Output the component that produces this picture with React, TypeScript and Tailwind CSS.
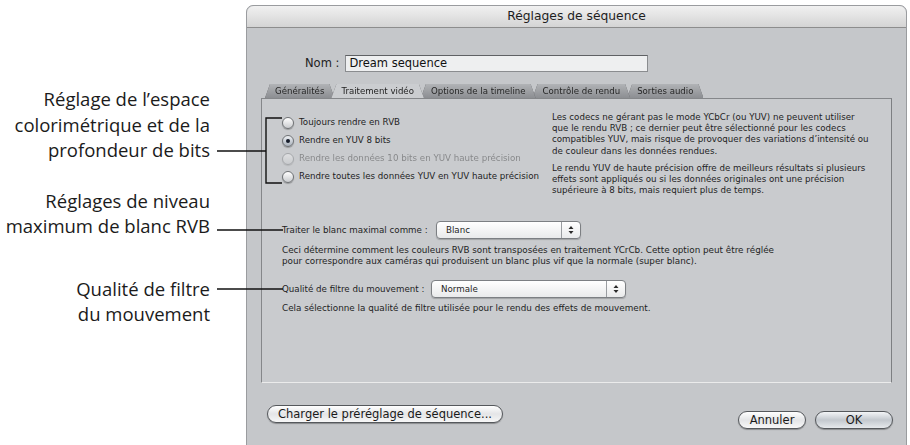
import React from 'react';

const Radio = ({ checked = false, disabled = false, label }: { checked?: boolean; disabled?: boolean; label: string }) => (
    <div className={`flex items-center h-[18px] ${disabled ? 'opacity-40' : ''}`}>
        <span
            className={`w-[12px] h-[12px] rounded-full border border-[#6f7275] shadow-[0_1px_1px_rgba(0,0,0,0.25)] flex items-center justify-center shrink-0 bg-gradient-to-b ${
                checked ? 'from-[#eef1f4] to-[#a9b1bb]' : 'from-white to-[#c9cbce]'
            }`}
        >
            {checked && <span className="w-[4px] h-[4px] rounded-full bg-[#151c2a]" />}
        </span>
        <span className="ml-[5px] text-[8.7px] text-[#1e1e1e] whitespace-nowrap">{label}</span>
    </div>
);

const Popup = ({ value, width }: { value: string; width: string }) => (
    <div className={`${width} h-[18px] flex rounded-[4px] border border-[#7c7f83] bg-gradient-to-b from-white to-[#e9eaeb] shadow-[0_1px_1px_rgba(0,0,0,0.2)]`}>
        <span className="flex-1 pl-[9px] text-[8.7px] leading-[16px] text-[#1e1e1e]">{value}</span>
        <span className="w-[19px] border-l border-[#9a9da1] flex items-center justify-center">
            <svg width="6" height="10" viewBox="0 0 6 10">
                <path d="M3 1 L5.5 4 H0.5 Z M3 9 L5.5 6 H0.5 Z" fill="#2a2a2a" />
            </svg>
        </span>
    </div>
);

const AquaButton = ({ label, className = '', primary = false }: { label: string; className?: string; primary?: boolean }) => (
    <button
        className={`h-[18px] rounded-full border border-[#55585c] text-[11.5px] leading-[16px] text-[#1a1a1a] shadow-[0_1px_1px_rgba(0,0,0,0.3)] ${
            primary
                ? 'bg-gradient-to-b from-[#f3f5f7] via-[#c3c8ce] to-[#e6e9ec]'
                : 'bg-gradient-to-b from-white via-[#e4e5e7] to-[#f7f7f7]'
        } ${className}`}
    >
        {label}
    </button>
);

const tabs = [
    { label: 'Généralités', z: 'z-[1]' },
    { label: 'Traitement vidéo', z: 'z-[10]', active: true },
    { label: 'Options de la timeline', z: 'z-[4]' },
    { label: 'Contrôle de rendu', z: 'z-[3]' },
    { label: 'Sorties audio', z: 'z-[2]' },
];

const App: React.FC = () => {
    return (
        <div className="relative w-[910px] h-[445px] bg-white overflow-hidden flex font-['DejaVu_Sans',sans-serif]">
            {/* callout texts */}
            <aside className="w-[246px] shrink-0 pr-[36px] pt-[86px] flex flex-col items-end text-right font-['Open_Sans',sans-serif] text-[18.5px] leading-[25.5px] text-[#1b1b1b]">
                <p>Réglage de l’espace<br />colorimétrique et de la<br />profondeur de bits</p>
                <p className="mt-[25px]">Réglages de niveau<br />maximum de blanc RVB</p>
                <p className="mt-[37px]">Qualité de filtre<br />du mouvement</p>
            </aside>

            {/* dialog */}
            <div className="mt-[5px] w-[661px] h-[442px] flex flex-col rounded-t-[7px] border border-[#9a9c9f] bg-[#c5c7ca]">
                <div className="h-[22px] shrink-0 rounded-t-[7px] bg-gradient-to-b from-[#f1f1f1] to-[#d4d4d4] border-b border-[#8d8d8d] flex items-center justify-center text-[12.3px] text-[#1e1e1e]">
                    Réglages de séquence
                </div>

                <div className="flex items-center h-[17px] mt-[27px] pl-[58px]">
                    <span className="text-[11.5px] text-[#222] mr-[6px]">Nom :</span>
                    <div className="w-[303px] h-[17px] bg-[#eeeff0] border border-[#8a8c8f] border-t-[#5f6164] text-[11.5px] leading-[15px] pl-[3px] text-[#111]">
                        Dream sequence
                    </div>
                </div>

                {/* tabs */}
                <div className="flex h-[14px] mt-[12px] ml-[18px]">
                    {tabs.map((t) => (
                        <div key={t.label} className={`relative ${t.z} -mr-[3px] [filter:drop-shadow(0_0_0.6px_#5a5c60)]`}>
                            <div
                                className={`px-[10px] h-[14px] flex items-center text-[8.6px] whitespace-nowrap [clip-path:polygon(5px_0,calc(100%-5px)_0,100%_100%,0_100%)] ${
                                    t.active
                                        ? 'bg-[#cbcdd0] text-[#1e1e1e]'
                                        : 'bg-gradient-to-b from-[#b1b3b6] to-[#8c8e92] text-[#262626]'
                                }`}
                            >
                                {t.label}
                            </div>
                        </div>
                    ))}
                </div>

                {/* panel */}
                <div className="mx-[14px] h-[285px] border border-[#85878a] border-b-[#ebebeb] border-r-[#7d7f82] bg-[#c9cbce] pl-[20px] pt-[15px]">
                    <div className="flex">
                        <div className="w-[270px] flex flex-col">
                            <Radio label="Toujours rendre en RVB" />
                            <Radio checked label="Rendre en YUV 8 bits" />
                            <Radio disabled label="Rendre les données 10 bits en YUV haute précision" />
                            <Radio label="Rendre toutes les données YUV en YUV haute précision" />
                        </div>
                        <div className="w-[330px] -mt-[2px] text-[8.7px] leading-[11.2px] text-[#1e1e1e] whitespace-nowrap">
                            <p>
                                Les codecs ne gérant pas le mode YCbCr (ou YUV) ne peuvent utiliser
                                <br />
                                que le rendu RVB ; ce dernier peut être sélectionné pour les codecs
                                <br />
                                compatibles YUV, mais risque de provoquer des variations d’intensité ou
                                <br />
                                de couleur dans les données rendues.
                            </p>
                            <p className="mt-[6px]">
                                Le rendu YUV de haute précision offre de meilleurs résultats si plusieurs
                                <br />
                                effets sont appliqués ou si les données originales ont une précision
                                <br />
                                supérieure à 8 bits, mais requiert plus de temps.
                            </p>
                        </div>
                    </div>

                    <div className="flex items-center mt-[25px]">
                        <span className="w-[154px] text-[8.7px] text-[#1e1e1e] whitespace-nowrap">Traiter le blanc maximal comme :</span>
                        <Popup value="Blanc" width="w-[145px]" />
                    </div>
                    <p className="mt-[6px] text-[8.8px] leading-[11px] text-[#1e1e1e] whitespace-nowrap">
                        Ceci détermine comment les couleurs RVB sont transposées en traitement YCrCb. Cette option peut être réglée
                        <br />
                        pour correspondre aux caméras qui produisent un blanc plus vif que la normale (super blanc).
                    </p>
                    <div className="flex items-center mt-[13px]">
                        <span className="w-[149px] text-[8.7px] text-[#1e1e1e] whitespace-nowrap">Qualité de filtre du mouvement :</span>
                        <Popup value="Normale" width="w-[195px]" />
                    </div>
                    <p className="mt-[5px] text-[8.8px] leading-[11px] text-[#1e1e1e] whitespace-nowrap">
                        Cela sélectionne la qualité de filtre utilisée pour le rendu des effets de mouvement.
                    </p>
                </div>

                {/* footer */}
                <div className="flex items-start pl-[20px] pr-[13px]">
                    <AquaButton label="Charger le préréglage de séquence..." className="mt-[22px] px-[10px]" />
                    <div className="ml-auto mt-[28px] flex gap-[9px]">
                        <AquaButton label="Annuler" className="w-[68px]" />
                        <AquaButton label="OK" primary className="w-[78px]" />
                    </div>
                </div>
            </div>

            {/* callout lines */}
            <svg className="absolute inset-0 pointer-events-none" width="910" height="445">
                <g stroke="#111" strokeWidth="1.4" fill="none">
                    <path d="M217 151 H266" />
                    <path d="M282 118 H266 V183 H282" />
                    <path d="M217 230 H283" />
                    <path d="M217 289 H283" />
                </g>
            </svg>
        </div>
    );
};

export default App;
